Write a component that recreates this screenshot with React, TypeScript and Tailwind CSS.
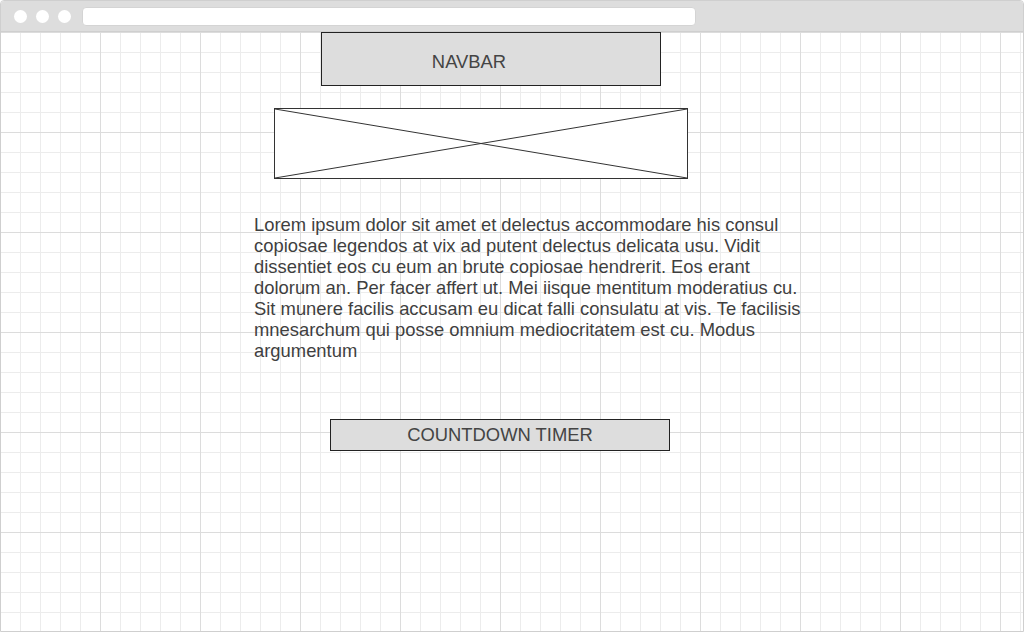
import React from 'react';

// wireframe: browser window with a grid canvas
const lorem =
  'Lorem ipsum dolor sit amet et delectus accommodare his consul copiosae legendos at vix ad putent delectus delicata usu. Vidit dissentiet eos cu eum an brute copiosae hendrerit. Eos erant dolorum an. Per facer affert ut. Mei iisque mentitum moderatius cu. Sit munere facilis accusam eu dicat falli consulatu at vis. Te facilisis mnesarchum qui posse omnium mediocritatem est cu. Modus argumentum';

const ImagePlaceholder = () => (
  <div className="ml-[273px] mt-[22px] w-[414px] h-[71px] border border-[#333] bg-white">
    <svg width="100%" height="100%" viewBox="0 0 412 69" preserveAspectRatio="none">
      <line x1="0" y1="0" x2="412" y2="69" stroke="#333" strokeWidth="1" />
      <line x1="0" y1="69" x2="412" y2="0" stroke="#333" strokeWidth="1" />
    </svg>
  </div>
);

const App = () => {
  return (
    <div className="w-[1024px] h-[632px] bg-white font-['Liberation_Sans',Arial,sans-serif] text-[#444]">
      <div className="w-full h-full flex flex-col border border-[#cfcfcf] rounded-t-[4px] overflow-hidden">
        {/* browser chrome */}
        <div className="h-[31px] shrink-0 bg-[#dddddd] border-b border-[#cfcfcf] flex items-center pl-[13px]">
          <div className="flex gap-[9px]">
            <span className="w-[13px] h-[13px] rounded-full bg-white" />
            <span className="w-[13px] h-[13px] rounded-full bg-white" />
            <span className="w-[13px] h-[13px] rounded-full bg-white" />
          </div>
          <div className="ml-[11px] w-[614px] h-[19px] rounded-[4px] bg-white border border-[#d4d4d4]" />
        </div>

        {/* canvas */}
        <div className="flex-1 flex flex-col bg-[linear-gradient(to_right,#dcdcdc_1px,transparent_1px),linear-gradient(to_bottom,#dcdcdc_1px,transparent_1px),linear-gradient(to_right,#ececec_1px,transparent_1px),linear-gradient(to_bottom,#ececec_1px,transparent_1px)] bg-[size:100px_100px,100px_100px,20px_20px,20px_20px] bg-[position:-1px_0]">
          <div className="ml-[320px] w-[340px] h-[54px] shrink-0 bg-[#dddddd] border border-[#222] flex items-center justify-center pr-[44px] pt-[6px] text-[18.4px]">
            NAVBAR
          </div>

          <ImagePlaceholder />

          <p className="ml-[253px] mt-[35px] w-[556px] text-[18.4px] leading-[21px] text-[#3f3f3f]">{lorem}</p>

          <div className="ml-[329px] mt-[58px] w-[340px] h-[32px] shrink-0 bg-[#dddddd] border border-[#222] flex items-center justify-center text-[18.4px]">
            COUNTDOWN TIMER
          </div>
        </div>
      </div>
    </div>
  );
};

export default App;
